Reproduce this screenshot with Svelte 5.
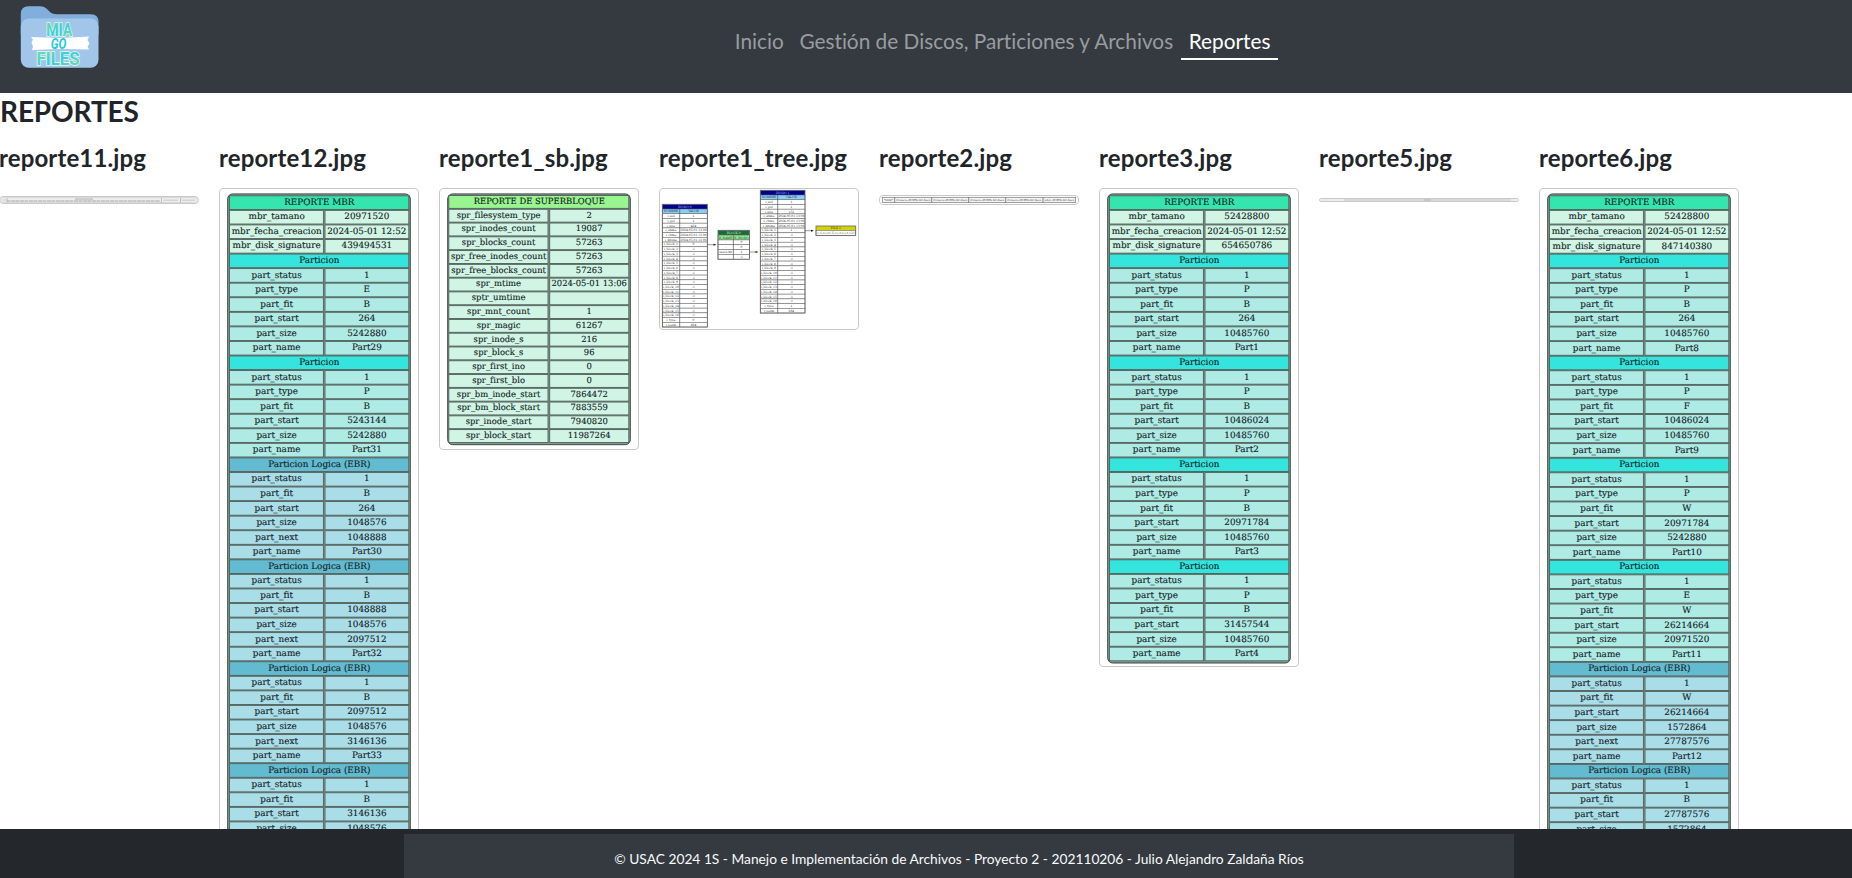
<script>
  const mbr = (size, sig) => [
    ['h', 'REPORTE MBR'],
    ['m', 'mbr_tamano', size],
    ['m', 'mbr_fecha_creacion', '2024-05-01 12:52'],
    ['m', 'mbr_disk_signature', sig]
  ];
  const part = (type, fit, start, size, name) => [
    ['p', 'Particion'],
    ['c', 'part_status', '1'],
    ['c', 'part_type', type],
    ['c', 'part_fit', fit],
    ['c', 'part_start', start],
    ['c', 'part_size', size],
    ['c', 'part_name', name]
  ];
  const ebr = (fit, start, size, next, name) => [
    ['e', 'Particion Logica (EBR)'],
    ['l', 'part_status', '1'],
    ['l', 'part_fit', fit],
    ['l', 'part_start', start],
    ['l', 'part_size', size],
    ['l', 'part_next', next],
    ['l', 'part_name', name]
  ].slice(0, next ? 7 : 5);
  const fills = {
    h: '#35e5ae', m: '#d0f5e4', p: '#33e5dd', c: '#afebe5',
    e: '#62bbd0', l: '#a9dde8', s: '#98f58f', b: '#d0f5e4'
  };

  const r12 = [
    ...mbr('20971520', '439494531'),
    ...part('E', 'B', '264', '5242880', 'Part29'),
    ...part('P', 'B', '5243144', '5242880', 'Part31'),
    ...ebr('B', '264', '1048576', '1048888', 'Part30'),
    ...ebr('B', '1048888', '1048576', '2097512', 'Part32'),
    ...ebr('B', '2097512', '1048576', '3146136', 'Part33'),
    ...ebr('B', '3146136', '1048576')
  ];
  const r3 = [
    ...mbr('52428800', '654650786'),
    ...part('P', 'B', '264', '10485760', 'Part1'),
    ...part('P', 'B', '10486024', '10485760', 'Part2'),
    ...part('P', 'B', '20971784', '10485760', 'Part3'),
    ...part('P', 'B', '31457544', '10485760', 'Part4')
  ];
  const r6 = [
    ...mbr('52428800', '847140380'),
    ...part('P', 'B', '264', '10485760', 'Part8'),
    ...part('P', 'F', '10486024', '10485760', 'Part9'),
    ...part('P', 'W', '20971784', '5242880', 'Part10'),
    ...part('E', 'W', '26214664', '20971520', 'Part11'),
    ...ebr('W', '26214664', '1572864', '27787576', 'Part12'),
    ...ebr('B', '27787576', '1572864')
  ];
  const sb = [
    ['s', 'REPORTE DE SUPERBLOQUE'],
    ...[
      ['spr_filesystem_type', '2'], ['spr_inodes_count', '19087'], ['spr_blocks_count', '57263'],
      ['spr_free_inodes_count', '57263'], ['spr_free_blocks_count', '57263'],
      ['spr_mtime', '2024-05-01 13:06'], ['sptr_umtime', ''], ['spr_mnt_count', '1'],
      ['spr_magic', '61267'], ['spr_inode_s', '216'], ['spr_block_s', '96'],
      ['spr_first_ino', '0'], ['spr_first_blo', '0'], ['spr_bm_inode_start', '7864472'],
      ['spr_bm_block_start', '7883559'], ['spr_inode_start', '7940820'], ['spr_block_start', '11987264']
    ].map(([k, v]) => ['b', k, v])
  ];

  const inode = (size, first, type) => [
    ['i_uid', '1'], ['i_gid', '1'], ['i_size', size],
    ['i_atime', '2024-05-01 13:06'], ['i_ctime', '2024-05-01 13:06'], ['i_mtime', '2024-05-01 13:06'],
    ...Array.from({ length: 16 }, (_, i) => [`i_block_${i + 1}`, i ? '-1' : first]),
    ['i_type', type], ['i_perm', '664']
  ];
  const nodes = [
    { x: 3.3, y: 16.3, w: 45, split: 17.4, rh: 4.72, title: 'INODO 0', bg: '#00008b', fg: '#b8b8ee', sub: '#87cefa', rows: [['NOMBRE', 'VALOR'], ...inode('424', '0', '0')] },
    { x: 59, y: 42.3, w: 31.5, split: 15.4, rh: 4.82, title: 'BLOCK 0', bg: '#1d6b3c', fg: '#c9e5d2', sub: '#90ee90', rows: [['B_NAME', 'B_INODO'], ['.', '0'], ['..', '0'], ['users.txt', '1'], ['', '-1']] },
    { x: 101.3, y: 2.3, w: 44.7, split: 17.4, rh: 4.72, title: 'INODO 1', bg: '#00008b', fg: '#b8b8ee', sub: '#87cefa', rows: [['NOMBRE', 'VALOR'], ...inode('152', '1', '1')] },
    { x: 157, y: 38, w: 39.7, split: 0, rh: 4.7, title: 'FILE 1', bg: '#d2d20a', fg: '#333300', sub: '#fff', rows: [['1,G,root1,U,root,root,123']] }
  ];
  const arrows = [[48.5, 56.7, 57.5], [90.7, 64, 99.5], [146, 42.7, 155]];

  const mbrGeo = { top: 8.1, rh: 14.56, a: 10.9, b: 104.4, c: 106, size: 8.85, base: 8.7 };
  const reports = [
    { name: 'reporte11.jpg', kind: 'strip11', h: 8 },
    { name: 'reporte12.jpg', kind: 'table', rows: r12, h: 770, geo: mbrGeo },
    { name: 'reporte1_sb.jpg', kind: 'table', rows: sb, h: 262, geo: { top: 7.8, rh: 13.77, a: 10.2, b: 109, c: 110.7, size: 8.44, base: 8 } },
    { name: 'reporte1_tree.jpg', kind: 'tree', h: 142 },
    { name: 'reporte2.jpg', kind: 'strip2', h: 10 },
    { name: 'reporte3.jpg', kind: 'table', rows: r3, h: 479, geo: mbrGeo },
    { name: 'reporte5.jpg', kind: 'strip5', h: 4 },
    { name: 'reporte6.jpg', kind: 'table', rows: r6, h: 770, geo: { ...mbrGeo, rh: 14.578 } }
  ];
  const segs = [3.3, 15.7, 52.7, 89.7, 126.7, 164, 196.7];
  const segText = ['*MBR*', ...Array(4).fill('Primaria 20.00% del disco'), 'Libre 20.00% del disco'];
</script>

<div class="page">
  <nav>
    <svg class="logo" width="80" height="64" viewBox="0 0 80 64">
      <defs>
        <linearGradient id="ink" x1="0" y1="0" x2="1" y2="1">
          <stop offset="0" stop-color="#86dc94" />
          <stop offset=".5" stop-color="#35cfdc" />
          <stop offset="1" stop-color="#86dc94" />
        </linearGradient>
      </defs>
      <path d="M.8 9Q.8 1.2 8.5 1.2H20Q25 1.2 28 5Q31 9.2 37 9.2H71Q78.5 9.2 78.5 17V30H.8Z" fill="#82aedd" />
      <rect x=".8" y="13.5" width="77.7" height="49.3" rx="8" fill="#a1c6ea" />
      <path d="M11 32L40 33L69 31.5L67.5 35L69.5 38.5L67.5 41.5L69 44.5L40 44L12 45L13 41.5L11.5 37.5L13 34.5Z" fill="#fff" />
      <g text-anchor="middle" font-family="Roboto, sans-serif" font-weight="700" fill="url(#ink)" stroke="#e4f7f5" paint-order="stroke">
        <text x="39.3" y="30.8" font-size="18.5" textLength="26" lengthAdjust="spacingAndGlyphs" stroke-width="1.6">MIA</text>
        <text x="38.5" y="44" font-size="15" font-style="italic" textLength="15.5" lengthAdjust="spacingAndGlyphs" fill="#20cbdc" stroke="none">GO</text>
        <text x="38" y="60.3" font-size="18.5" textLength="43" lengthAdjust="spacingAndGlyphs" stroke-width="1.6">FILES</text>
      </g>
    </svg>
    <div class="links">
      <a href="#inicio">Inicio</a>
      <a href="#gestion">Gestión de Discos, Particiones y Archivos</a>
      <a href="#reportes" class="active">Reportes</a>
    </div>
  </nav>

  <h1>REPORTES</h1>
  <main>
    {#each reports as r}
      <section>
        <h2>{r.name}</h2>
        <div class="holder">
          <svg width="200" height={r.h} viewBox="0 0 200 {r.h}">
            <rect x=".5" y=".5" width="199" height={r.h - 1} rx={Math.min(3.5, r.h / 2 - 0.5)} fill="#fff" stroke="#c9c9c9" />
            {#if r.kind === 'table'}
              {@const g = r.geo}
              <rect x="8.7" y="5.9" width="182.6" height={r.h === 770 ? 780 : g.top + r.rows.length * g.rh - 4.9} rx="5" fill="#84a094" stroke="#303833" stroke-width=".9" />
              <g class="cells" font-size={g.size} text-anchor="middle" fill="#14201f">
                {#each r.rows as row, i}
                  {@const y = g.top + i * g.rh}
                  <g stroke="#53605b" stroke-width=".9" fill={fills[row[0]]}>
                    {#if row.length === 2}
                      <rect x={g.a - 0.4} y={y - 0.3} width={190.2 - g.a} height={g.rh - 0.9} />
                    {:else}
                      <rect x={g.a - 0.4} y={y - 0.3} width={g.b - g.a + 0.4} height={g.rh - 0.9} />
                      <rect x={g.c} y={y - 0.3} width={189.8 - g.c} height={g.rh - 0.9} />
                    {/if}
                  </g>
                  {#if row.length === 2}
                    <text x="100.3" y={y + g.base}>{row[1]}</text>
                  {:else}
                    <text x={(g.a + g.b) / 2} y={y + g.base}>{row[1]}</text>
                    <text x={(g.c + 189.7) / 2} y={y + g.base}>{row[2]}</text>
                  {/if}
                {/each}
              </g>
            {:else if r.kind === 'tree'}
              <g class="cells thin" font-size="2.95" text-anchor="middle">
                {#each nodes as n}
                  <rect x={n.x} y={n.y} width={n.w} height={n.rh} fill={n.bg} />
                  <text x={n.x + n.w / 2} y={n.y + 3.4} fill={n.fg}>{n.title}</text>
                  {#each n.rows as row, i}
                    {@const y = n.y + (i + 1) * n.rh}
                    <rect x={n.x} {y} width={n.w} height={n.rh} fill={i === 0 ? n.sub : '#fff'} stroke="#666" stroke-width=".55" />
                    {#if row.length > 1}
                      <text x={n.x + n.split / 2} y={y + 3.4} fill="#333">{row[0]}</text>
                      <text x={n.x + (n.w + n.split) / 2} y={y + 3.4} fill="#333">{row[1]}</text>
                    {:else}
                      <text x={n.x + n.w / 2} y={y + 3.4} fill="#555">{row[0]}</text>
                    {/if}
                  {/each}
                  {#if n.split}
                    <path d="M{n.x + n.split} {n.y + n.rh}V{n.y + n.rh * (n.rows.length + 1)}" stroke="#555" stroke-width=".7" />
                  {/if}
                  <rect x={n.x} y={n.y} width={n.w} height={n.rh * (n.rows.length + 1)} fill="none" stroke="#666" stroke-width=".8" />
                {/each}
                {#each arrows as [x1, y, x2]}
                  <path d="M{x1} {y}H{x2 - 3}" stroke="#333" stroke-width=".5" />
                  <path d="M{x2 - 3} {y - 1}L{x2} {y}L{x2 - 3} {y + 1}Z" fill="#111" />
                {/each}
              </g>
            {:else if r.kind === 'strip2'}
              <rect x="3.3" y="2.3" width="193.4" height="5.2" fill="#f4f4f4" stroke="#777" stroke-width=".7" />
              {#each segText as t, i}
                {#if i}<path d="M{segs[i]} 2.3V7.5" stroke="#666" stroke-width=".8" />{/if}
                <text class="cells" x={(segs[i] + segs[i + 1]) / 2} y="6" font-size="2.55" text-anchor="middle" fill="#222">{t}</text>
              {/each}
            {:else if r.kind === 'strip11'}
              <rect x="1.5" y="1.5" width="196.5" height="5" rx="2" fill="#ededed" stroke="#cfcfcf" stroke-width=".7" />
              <path d="M8 5H161" stroke="#a8a8a8" stroke-width="1.1" stroke-dasharray="3 .6 5 .4" />
              <path d="M76 3H94" stroke="#b0b0b0" stroke-width="1" />
              <path d="M164 4.2H179M183 4.2H196M3.5 4H6.5" stroke="#c2c2c2" stroke-width=".8" />
              <path d="M8 2V6.5M162.5 2V6.5M181.5 2V6.5" stroke="#aaa" stroke-width=".7" />
            {:else}
              <path d="M2 2H25" stroke="#dedede" stroke-width="1.2" />
              <path d="M25 2H105M112 2H192" stroke="#cdcdcd" stroke-width="1.4" />
              <path d="M105 2H112" stroke="#bbb" stroke-width="1.6" />
              <path d="M192 2H198" stroke="#e2e2e2" stroke-width="1.2" />
            {/if}
          </svg>
        </div>
      </section>
    {/each}
  </main>

  <footer>
    <div class="credit">© USAC 2024 1S - Manejo e Implementación de Archivos - Proyecto 2 - 202110206 - Julio Alejandro Zaldaña Ríos</div>
  </footer>
</div>

<style>
  :global(body) { margin: 0; overflow: hidden; }
  .page {
    height: 878px;
    display: flex;
    flex-direction: column;
    overflow: hidden;
    background: #fff;
    color: #212529;
    font-family: Lato, sans-serif;
    font-variant-ligatures: none;
  }
  nav {
    flex: none;
    height: 93px;
    box-sizing: border-box;
    display: flex;
    padding: 5px 0 0 20px;
    background: #343a40;
  }
  .logo { flex: none; }
  .links { display: flex; margin: 18px 0 0 627px; height: 37px; }
  .links a {
    box-sizing: border-box;
    height: 37px;
    padding: 0 7.8px;
    line-height: 36px;
    font-size: 20.8px;
    color: #999c9f;
    text-decoration: none;
    white-space: nowrap;
  }
  .links .active { color: #fff; border-bottom: 2px solid #fff; }
  h1, h2 { margin: 0; font-weight: 700; }
  h1 { flex: none; font-size: 28px; line-height: 34px; padding: 1px 0; letter-spacing: -.12px; }
  main {
    flex: 1;
    min-height: 0;
    overflow: hidden;
    display: grid;
    grid-template-columns: repeat(8, 200px);
    column-gap: 20px;
    align-items: start;
    margin-left: -1px;
    padding-top: 14px;
  }
  h2 { font-size: 24px; line-height: 29px; height: 45px; white-space: nowrap; letter-spacing: .13px; }
  .holder { display: flex; align-items: center; min-height: 24px; }
  .holder svg { display: block; flex: none; }
  .cells { font-family: "DejaVu Serif", serif; text-rendering: geometricPrecision; }
  .cells text { stroke: #14201f; stroke-width: .12px; }
  .thin text { stroke: none; }
  footer {
    flex: none;
    height: 49px;
    box-sizing: border-box;
    padding: 5px 338px 0 404px;
    background: #24282c;
  }
  .credit {
    height: 44px;
    box-sizing: border-box;
    padding-top: 4px;
    line-height: 41px;
    background: #343a40;
    color: #f8f9fa;
    text-align: center;
    font-size: 13.78px;
    white-space: nowrap;
  }
</style>
